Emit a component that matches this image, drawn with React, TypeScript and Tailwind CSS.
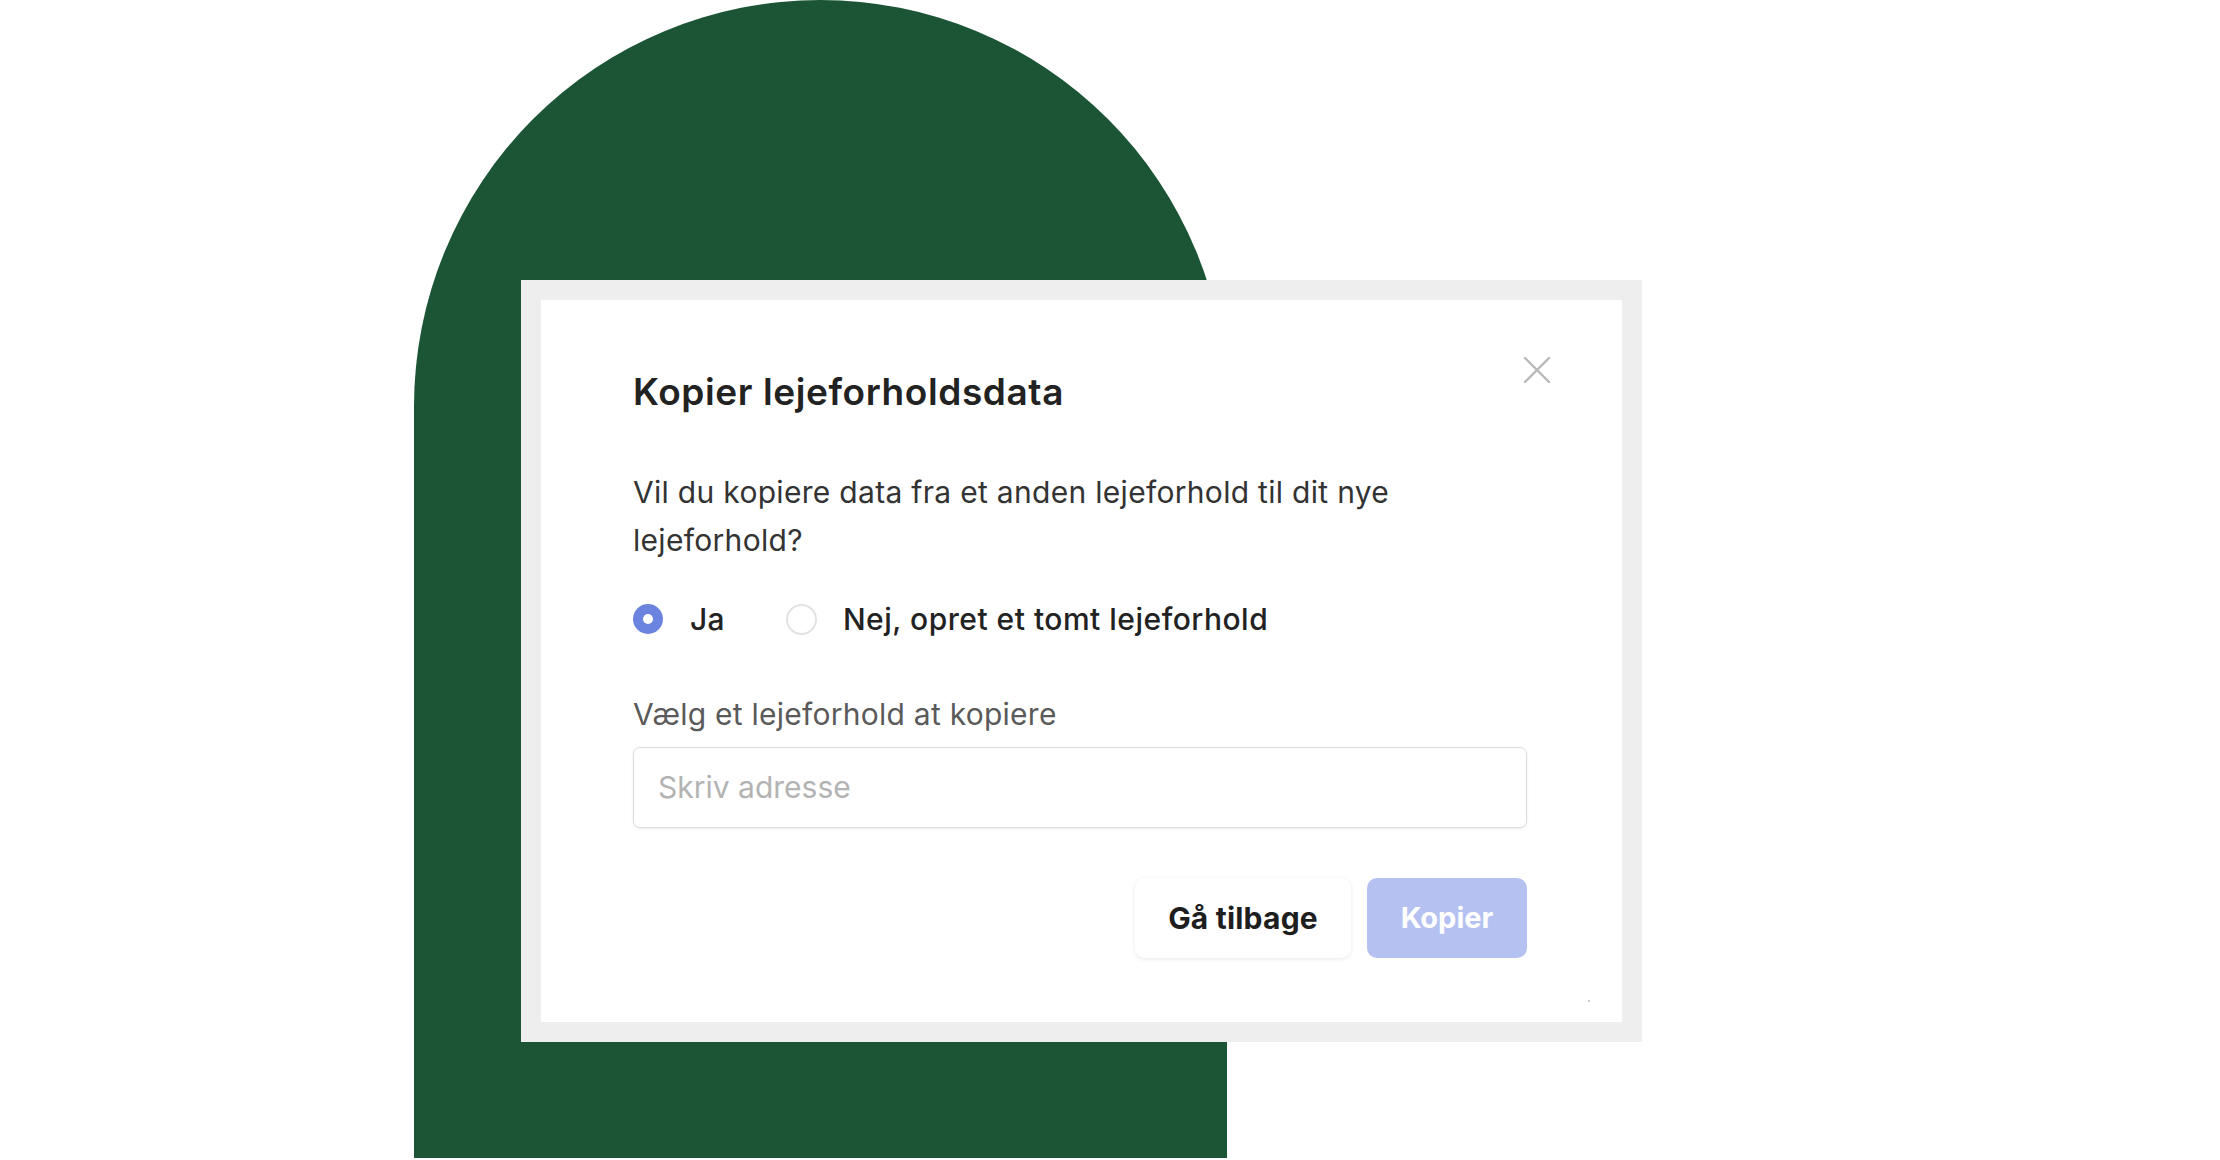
import React from "react";

export default function App() {
  return (
    <div className="relative w-[2220px] h-[1160px] bg-white overflow-hidden font-['Inter','Noto_Sans',sans-serif]">
      {/* green arch background */}
      <div className="ml-[414px] w-[813px] h-[1158px] rounded-t-full bg-[#1b5535]" />

      {/* dialog frame overlaying the arch */}
      <div className="absolute left-[521px] top-[280px] w-[1121px] h-[762px] bg-[#eeeeee] p-[20px]">
        <div className="relative h-full bg-white pl-[92px] pr-[95px] pt-[72px]">
          <button className="absolute right-[71px] top-[56px] w-[28px] h-[28px] text-[#b8b8b8]">
            <svg viewBox="0 0 28 28" className="w-[28px] h-[28px]" fill="none" stroke="currentColor" strokeWidth="2.4" strokeLinecap="round">
              <path d="M2 2L26 26M26 2L2 26" />
            </svg>
          </button>

          <h2 className="text-[37px] leading-[40px] font-semibold text-[#222222] tracking-[0.6px]">
            Kopier lejeforholdsdata
          </h2>

          <p className="mt-[56px] text-[30px] leading-[48px] text-[#333333] tracking-[0.3px]">
            Vil du kopiere data fra et anden lejeforhold til dit nye
            <br />
            lejeforhold?
          </p>

          <div className="mt-[39px] flex items-center h-[32px]">
            <label className="flex items-center">
              <span className="w-[30px] h-[30px] rounded-full bg-[#6b84e0] flex items-center justify-center">
                <span className="w-[10px] h-[10px] rounded-full bg-white" />
              </span>
              <span className="ml-[27px] text-[30px] font-medium text-[#222222] tracking-[0.3px]">Ja</span>
            </label>
            <label className="ml-[61px] flex items-center">
              <span className="w-[31px] h-[31px] rounded-full border-2 border-[#e2e2e2] bg-white" />
              <span className="ml-[26px] text-[30px] font-medium text-[#222222] tracking-[0.5px]">Nej, opret et tomt lejeforhold</span>
            </label>
          </div>

          <div className="mt-[63px] text-[30px] leading-[32px] text-[#5a5a5a] tracking-[0.25px]">
            Vælg et lejeforhold at kopiere
          </div>

          <div className="mt-[17px] h-[81px] rounded-[7px] border border-[#dcdcdc] shadow-[0_1px_3px_rgba(0,0,0,0.08)] flex items-center pl-[24px]">
            <span className="text-[30px] text-[#b3b3b3]">Skriv adresse</span>
          </div>

          <div className="mt-[50px] flex justify-end gap-[16px]">
            <button className="w-[216px] h-[80px] rounded-[10px] bg-white shadow-[0_1px_5px_rgba(0,0,0,0.09)] text-[30px] font-bold text-[#1e1e1e] tracking-[0.2px]">
              Gå tilbage
            </button>
            <button className="w-[160px] h-[80px] rounded-[10px] bg-[#b5c1f0] text-[29px] font-bold text-white">
              Kopier
            </button>
          </div>

          <span className="absolute left-[1047px] top-[700px] w-[2px] h-[2px] bg-[#d0d0d0]" />
        </div>
      </div>
    </div>
  );
}
